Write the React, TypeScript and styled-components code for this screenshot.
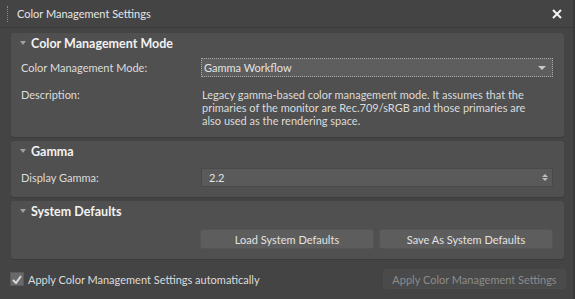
import styled, { createGlobalStyle } from "styled-components"

const GlobalStyle = createGlobalStyle`
  html, body {
    margin: 0;
    padding: 0;
    background: #444444;
  }
  body {
    font-family: Lato, "Liberation Sans", sans-serif;
    font-size: 11px;
    color: #dcdcdc;
  }
`

const Window = styled.div`
  width: 575px;
  height: 299px;
  box-sizing: border-box;
  background: #444444;
  box-shadow: inset -2px 0 0 #3a3a3a;
  display: flex;
  flex-direction: column;
`

const TitleBar = styled.div`
  height: 28px;
  box-sizing: border-box;
  border-bottom: 1px solid #393939;
  display: flex;
  align-items: center;
  padding: 0 12px 0 7px;
`

const Grip = styled.div`
  width: 0;
  height: 16px;
  border-left: 1px dotted #8a8a8a;
  margin-right: 9px;
`

const Title = styled.span`
  flex: 1;
  color: #e6e6e6;
`

const CloseButton = styled.button`
  background: transparent;
  border: none;
  padding: 0;
  width: 12px;
  height: 12px;
  display: flex;
  align-items: center;
  justify-content: center;
  cursor: pointer;
`

const Body = styled.div`
  flex: 1;
  display: flex;
  flex-direction: column;
  padding: 5px 9px 0 11px;
  gap: 4px;
`

const Panel = styled.section`
  width: 553px;
  box-sizing: border-box;
  background: #505050;
  border-radius: 3px;
  box-shadow: 0 1px 0 #3c3c3c;
  padding: 0 11px 0 9px;
`

const PanelHeader = styled.div`
  height: 21px;
  display: flex;
  align-items: center;
  gap: 5px;
`

const Arrow = styled.span`
  width: 0;
  height: 0;
  border-left: 3px solid transparent;
  border-right: 3px solid transparent;
  border-top: 4px solid #a0a0a0;
  margin-top: -2px;
`

const HeaderText = styled.span`
  font-weight: 700;
  font-size: 12.5px;
  color: #f2f2f2;
`

const Row = styled.div<{ $top?: number; $bottom?: number }>`
  display: grid;
  grid-template-columns: 181px 1fr;
  align-items: center;
  padding-top: ${({ $top }) => $top ?? 0}px;
  padding-bottom: ${({ $bottom }) => $bottom ?? 0}px;
`

const Label = styled.span<{ $top?: boolean }>`
  padding-left: 1px;
  align-self: ${({ $top }) => ($top ? "start" : "center")};
  line-height: 13px;
`

const Select = styled.div`
  height: 19px;
  box-sizing: border-box;
  background: #5e5e5e;
  border: 1px dotted #a8a8a8;
  display: flex;
  align-items: center;
  justify-content: space-between;
  padding: 0 6px 0 2px;
  color: #e2e2e2;
`

const Spinner = styled.div`
  height: 19px;
  box-sizing: border-box;
  background: #5a5a5a;
  border: 1px solid #4a4a4a;
  display: flex;
  align-items: center;
  justify-content: space-between;
  padding: 0 4px 0 7px;
  color: #e2e2e2;
`

const SpinArrows = styled.div`
  display: flex;
  flex-direction: column;
  gap: 1px;
`

const SpinUp = styled.span`
  border-left: 3px solid transparent;
  border-right: 3px solid transparent;
  border-bottom: 3px solid #bdbdbd;
`

const SpinDown = styled.span`
  border-left: 3px solid transparent;
  border-right: 3px solid transparent;
  border-top: 3px solid #bdbdbd;
`

const DropArrow = styled.span`
  border-left: 4px solid transparent;
  border-right: 4px solid transparent;
  border-top: 4px solid #c8c8c8;
`

const Description = styled.p`
  margin: 0;
  max-width: 334px;
  line-height: 13px;
  padding-left: 1px;
  align-self: start;
`

const ButtonRow = styled.div`
  display: grid;
  grid-template-columns: 174px 174px;
  gap: 5px;
  justify-content: end;
  padding: 7px 0 10px;
`

const Button = styled.button<{ $disabled?: boolean }>`
  height: 20px;
  box-sizing: border-box;
  border-radius: 3px;
  border: 1px solid ${({ $disabled }) => ($disabled ? "#4c4c4c" : "#555555")};
  background: ${({ $disabled }) => ($disabled ? "#4a4a4a" : "#5d5d5d")};
  color: ${({ $disabled }) => ($disabled ? "#8c8c8c" : "#e2e2e2")};
  font-family: inherit;
  font-size: 11px;
  padding: 0;
  white-space: nowrap;
`

const Footer = styled.div`
  display: flex;
  align-items: center;
  justify-content: space-between;
  padding: 6px 0 0 0;
`

const CheckLabel = styled.label`
  display: flex;
  align-items: center;
  gap: 4px;
  margin-left: -1px;
`

const CheckBox = styled.span`
  width: 12px;
  height: 12px;
  background: #6a6a6a;
  border: 1px solid #5a5a5a;
  display: flex;
  align-items: center;
  justify-content: center;
`

const ApplyButton = styled(Button)`
  width: 183px;
`

export default function App() {
  return (
    <>
      <GlobalStyle />
      <Window>
        <TitleBar>
          <Grip />
          <Title>Color Management Settings</Title>
          <CloseButton>
            <svg width="10" height="10" viewBox="0 0 10 10">
              <path d="M1 1 L9 9 M9 1 L1 9" stroke="#f4f4f4" strokeWidth="2" />
            </svg>
          </CloseButton>
        </TitleBar>
        <Body>
          <Panel>
            <PanelHeader>
              <Arrow />
              <HeaderText>Color Management Mode</HeaderText>
            </PanelHeader>
            <Row $top={4}>
              <Label>Color Management Mode:</Label>
              <Select>
                Gamma Workflow
                <DropArrow />
              </Select>
            </Row>
            <Row $top={11} $bottom={10}>
              <Label $top>Description:</Label>
              <Description>
                Legacy gamma-based color management mode. It assumes that the
                primaries of the monitor are Rec.709/sRGB and those primaries are
                also used as the rendering space.
              </Description>
            </Row>
          </Panel>
          <Panel>
            <PanelHeader>
              <Arrow />
              <HeaderText>Gamma</HeaderText>
            </PanelHeader>
            <Row $top={6} $bottom={10}>
              <Label>Display Gamma:</Label>
              <Spinner>
                2.2
                <SpinArrows>
                  <SpinUp />
                  <SpinDown />
                </SpinArrows>
              </Spinner>
            </Row>
          </Panel>
          <Panel>
            <PanelHeader>
              <Arrow />
              <HeaderText>System Defaults</HeaderText>
            </PanelHeader>
            <ButtonRow>
              <Button>Load System Defaults</Button>
              <Button>Save As System Defaults</Button>
            </ButtonRow>
          </Panel>
          <Footer>
            <CheckLabel>
              <CheckBox>
                <svg width="10" height="9" viewBox="0 0 10 9">
                  <path d="M1 5 L4 8 L9 1" stroke="#d8d8d8" strokeWidth="2" fill="none" />
                </svg>
              </CheckBox>
              Apply Color Management Settings automatically
            </CheckLabel>
            <ApplyButton $disabled>Apply Color Management Settings</ApplyButton>
          </Footer>
        </Body>
      </Window>
    </>
  )
}
